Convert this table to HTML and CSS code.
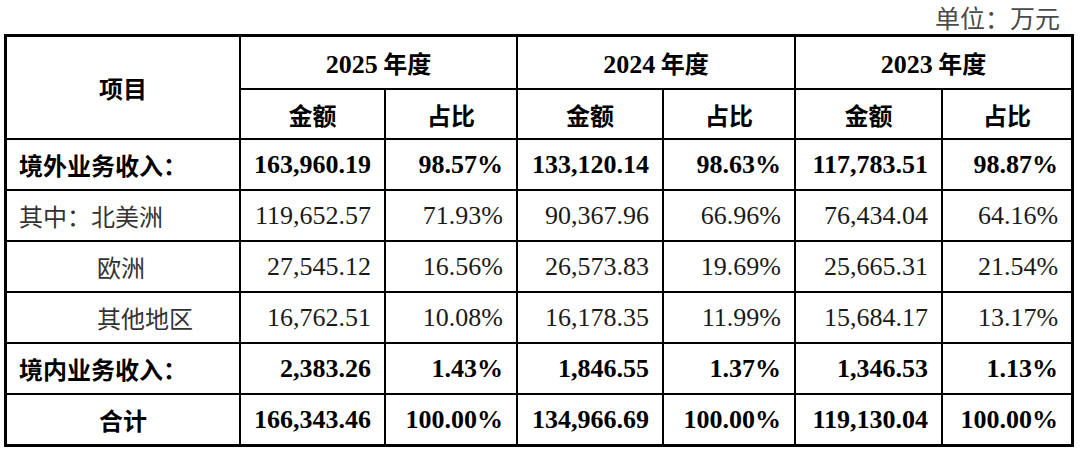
FILE: index.html
```html
<!DOCTYPE html>
<html lang="zh-CN">
<head>
<meta charset="utf-8">
<title>境内外业务收入</title>
<link rel="stylesheet" href="styles.css">
</head>
<body>
<div class="page">
  <div class="unit">单位：万元</div>
  <table class="tbl">
    <colgroup>
      <col class="c-item">
      <col class="c-amt">
      <col class="c-pct">
      <col class="c-amt2">
      <col class="c-pct">
      <col class="c-amt3">
      <col class="c-pct3">
    </colgroup>
    <thead>
      <tr class="h1">
        <th rowspan="2" class="hd">项目</th>
        <th colspan="2" class="hd"><span class="num">2025</span> 年度</th>
        <th colspan="2" class="hd"><span class="num">2024</span> 年度</th>
        <th colspan="2" class="hd"><span class="num">2023</span> 年度</th>
      </tr>
      <tr class="h2">
        <th class="hd">金额</th>
        <th class="hd">占比</th>
        <th class="hd">金额</th>
        <th class="hd">占比</th>
        <th class="hd">金额</th>
        <th class="hd">占比</th>
      </tr>
    </thead>
    <tbody>
      <tr class="r bold r1">
        <td class="lbl">境外业务收入：</td>
        <td class="v">163,960.19</td>
        <td class="v">98.57%</td>
        <td class="v">133,120.14</td>
        <td class="v">98.63%</td>
        <td class="v">117,783.51</td>
        <td class="v">98.87%</td>
      </tr>
      <tr class="r">
        <td class="lbl">其中：北美洲</td>
        <td class="v">119,652.57</td>
        <td class="v">71.93%</td>
        <td class="v">90,367.96</td>
        <td class="v">66.96%</td>
        <td class="v">76,434.04</td>
        <td class="v">64.16%</td>
      </tr>
      <tr class="r">
        <td class="lbl sub">欧洲</td>
        <td class="v">27,545.12</td>
        <td class="v">16.56%</td>
        <td class="v">26,573.83</td>
        <td class="v">19.69%</td>
        <td class="v">25,665.31</td>
        <td class="v">21.54%</td>
      </tr>
      <tr class="r">
        <td class="lbl sub">其他地区</td>
        <td class="v">16,762.51</td>
        <td class="v">10.08%</td>
        <td class="v">16,178.35</td>
        <td class="v">11.99%</td>
        <td class="v">15,684.17</td>
        <td class="v">13.17%</td>
      </tr>
      <tr class="r bold">
        <td class="lbl">境内业务收入：</td>
        <td class="v">2,383.26</td>
        <td class="v">1.43%</td>
        <td class="v">1,846.55</td>
        <td class="v">1.37%</td>
        <td class="v">1,346.53</td>
        <td class="v">1.13%</td>
      </tr>
      <tr class="r bold">
        <td class="lbl center">合计</td>
        <td class="v">166,343.46</td>
        <td class="v">100.00%</td>
        <td class="v">134,966.69</td>
        <td class="v">100.00%</td>
        <td class="v">119,130.04</td>
        <td class="v">100.00%</td>
      </tr>
    </tbody>
  </table>
</div>
</body>
</html>
```

FILE: styles.css
```css
html, body {
  margin: 0;
  padding: 0;
  background: #ffffff;
}

.page {
  width: 1080px;
  height: 455px;
  padding: 0 0 0 4px;
  box-sizing: border-box;
}

.unit {
  height: 34px;
  line-height: 34px;
  text-align: right;
  padding-right: 20px;
  font-family: "Noto Sans CJK SC", sans-serif;
  font-size: 25px;
  color: #4a4a4a;
  box-sizing: border-box;
}

.tbl {
  border-collapse: collapse;
  table-layout: fixed;
  width: 1070px;
  border: 3px solid #000;
  color: #111;
}

.c-item { width: 234.5px; }
.c-amt { width: 145px; }
.c-pct { width: 132px; }
.c-amt2 { width: 146px; }
.c-amt3 { width: 147px; }
.c-pct3 { width: 130.5px; }

.tbl th,
.tbl td {
  border: 2px solid #000;
  padding: 0;
  vertical-align: middle;
  white-space: nowrap;
}

.hd {
  font-family: "Noto Sans CJK SC", sans-serif;
  font-weight: 700;
  font-size: 24px;
  text-align: center;
  color: #000;
}

.hd .num {
  font-family: "Liberation Serif", serif;
  font-size: 26px;
  font-weight: 700;
}

.h1 th { height: 51px; }
.h2 th { height: 48px; }
.r td { height: 49px; }

.lbl {
  font-family: "Noto Sans CJK SC", sans-serif;
  font-size: 24px;
  font-weight: 400;
  color: #333;
  text-align: left;
  padding-left: 12px !important;
}

.lbl.sub { padding-left: 90px !important; }
.lbl.center { text-align: center; padding-left: 0 !important; }

.v {
  font-family: "Liberation Serif", serif;
  font-size: 26px;
  text-align: right;
  padding-right: 13px !important;
  color: #1a1a1a;
}

.bold .lbl,
.bold .v {
  font-weight: 700;
  color: #000;
}
```
